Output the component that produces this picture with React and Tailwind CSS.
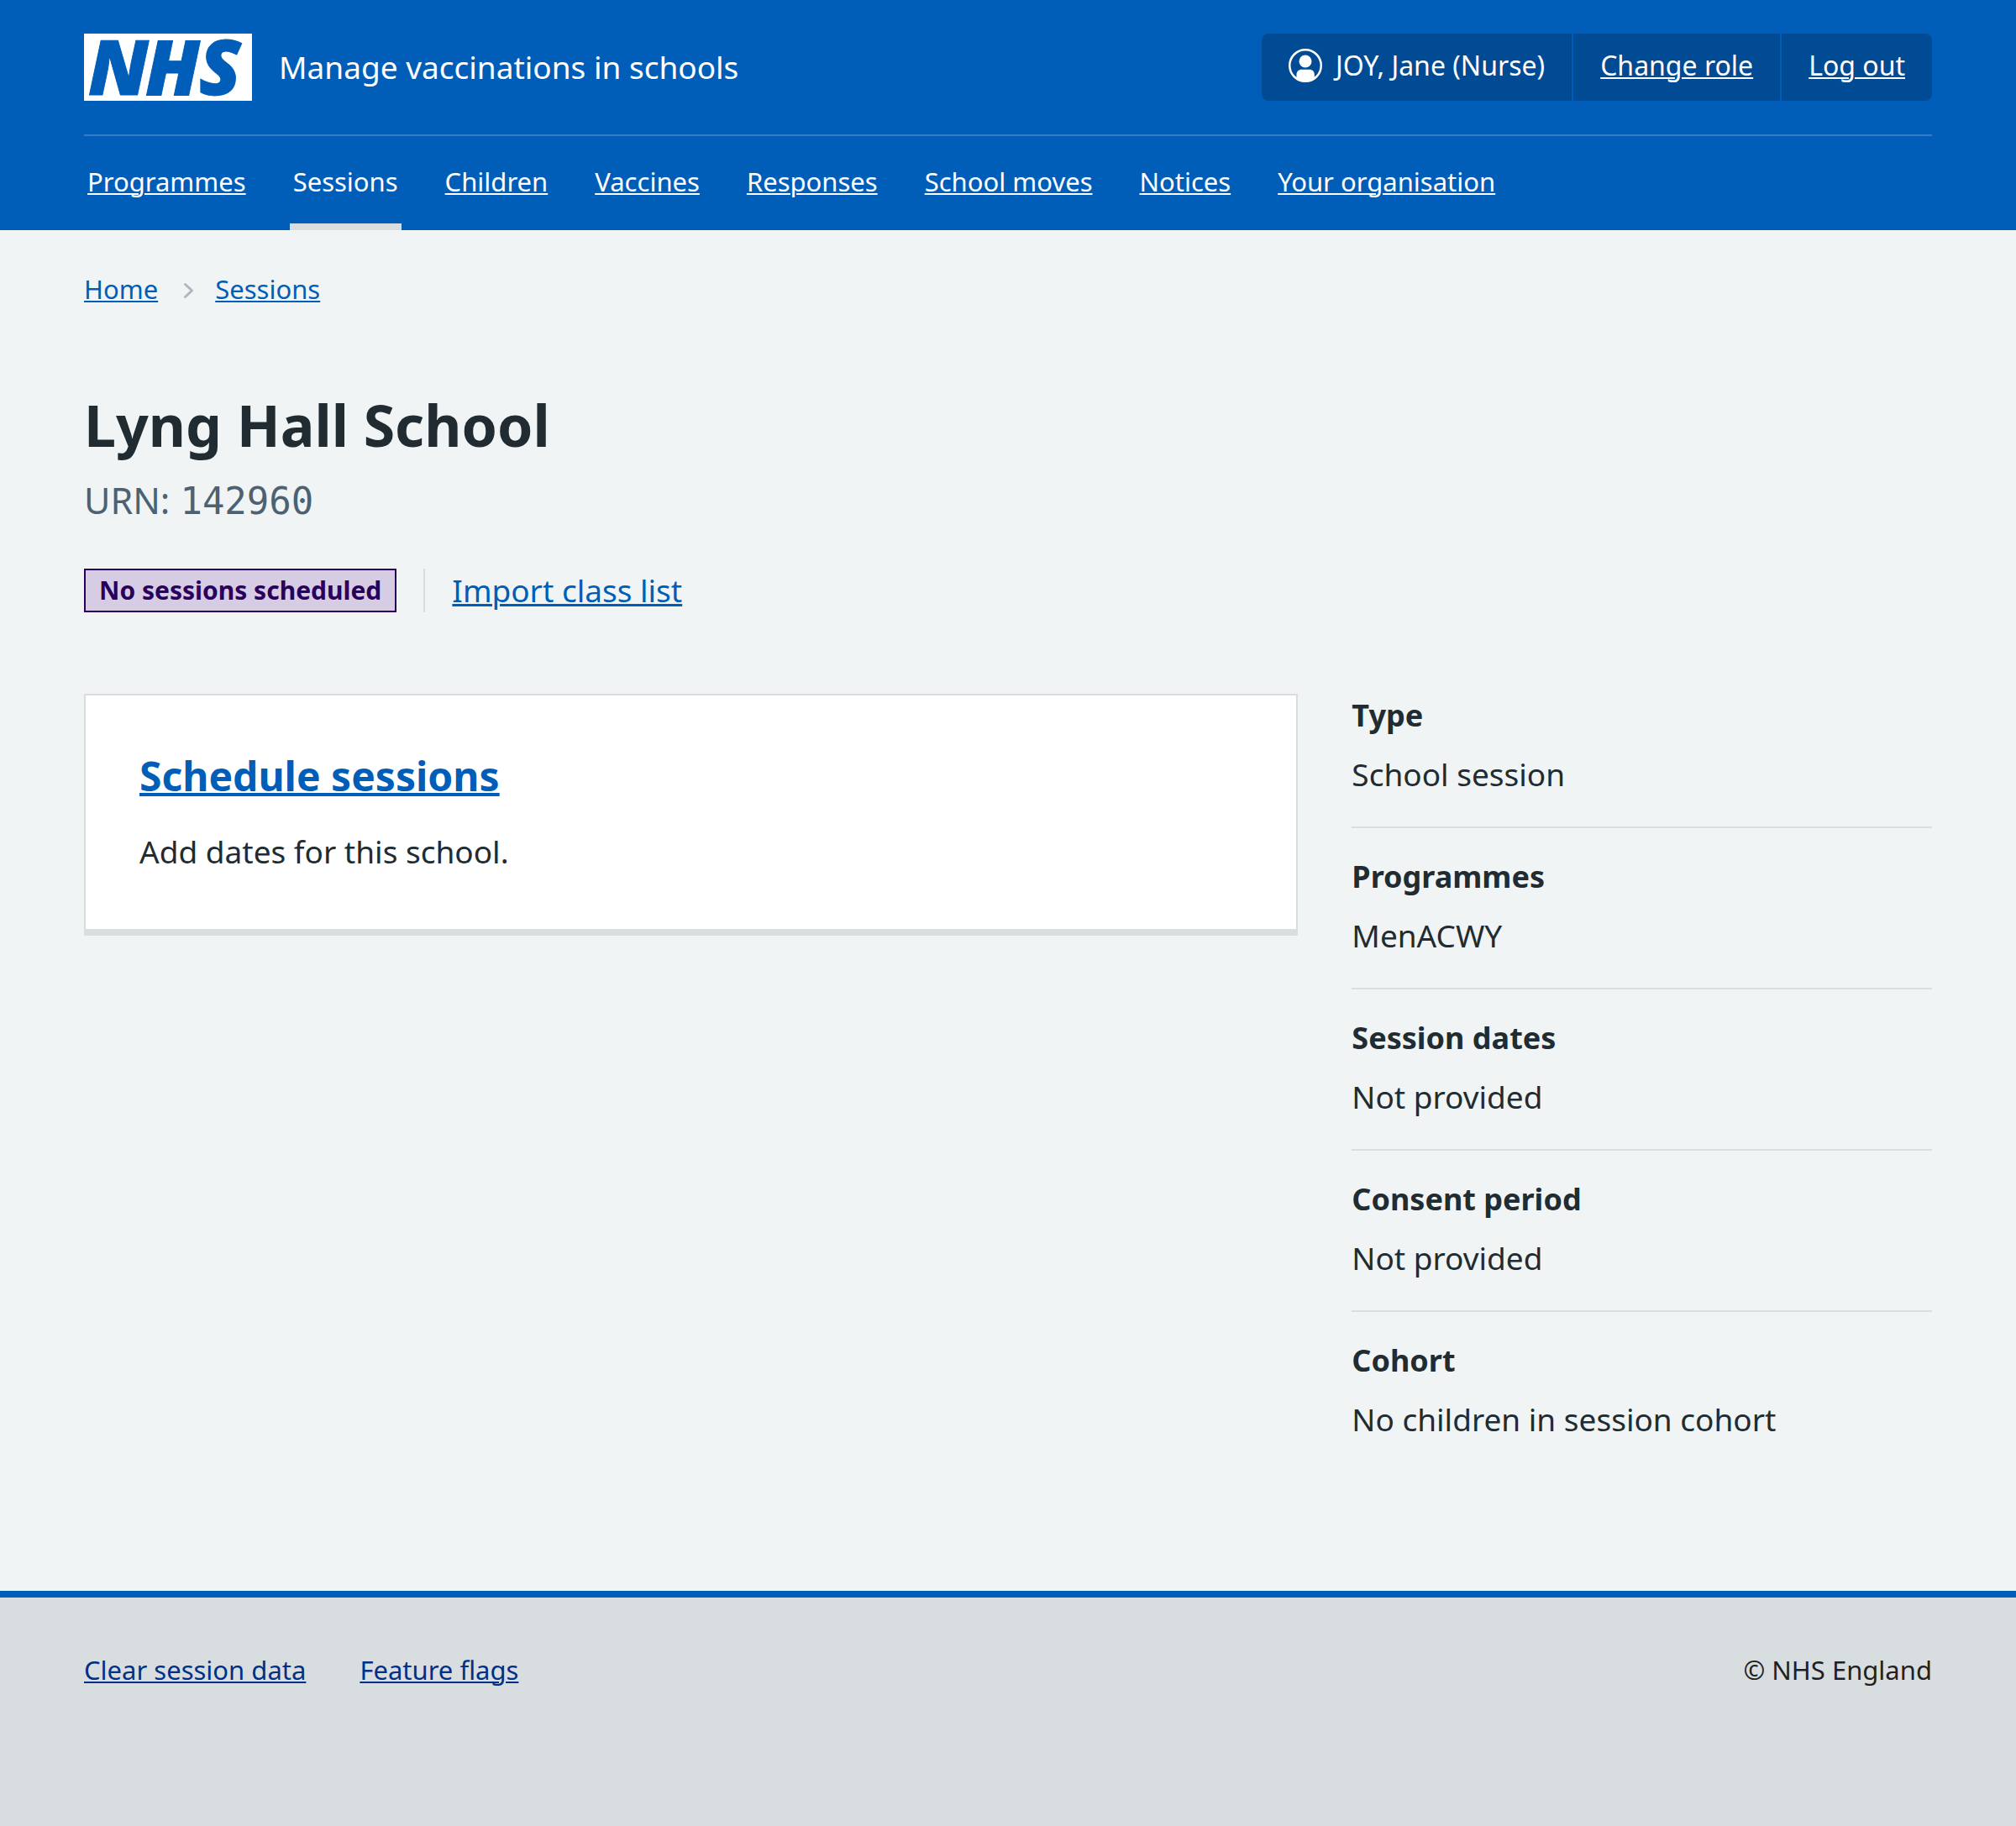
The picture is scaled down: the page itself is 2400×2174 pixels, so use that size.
import React from "react";

const navItems = [
  { label: "Programmes" },
  { label: "Sessions", current: true },
  { label: "Children" },
  { label: "Vaccines" },
  { label: "Responses" },
  { label: "School moves" },
  { label: "Notices" },
  { label: "Your organisation" },
];

const details = [
  { term: "Type", value: "School session" },
  { term: "Programmes", value: "MenACWY" },
  { term: "Session dates", value: "Not provided" },
  { term: "Consent period", value: "Not provided" },
  { term: "Cohort", value: "No children in session cohort" },
];

const thinLink = "underline decoration-2 underline-offset-2";

function Logo() {
  return (
    <a href="#" aria-label="NHS homepage" className="block h-20 w-[200px] shrink-0">
      <svg viewBox="0 0 200 80" className="block h-full w-full overflow-visible" role="img" aria-label="NHS">
        <rect width="200" height="80" fill="#fff" />
        <text
          x="5 73 137"
          y="72.5"
          fill="#005eb8"
          stroke="#005eb8"
          strokeWidth="1"
          fontFamily="'Noto Sans', 'Open Sans', sans-serif"
          fontSize="91"
          fontWeight="900"
          fontStyle="italic"
        >
          NHS
        </text>
      </svg>
    </a>
  );
}

function UserIcon() {
  return (
    <svg viewBox="0 0 40 40" className="h-10 w-10 shrink-0" aria-hidden="true">
      <circle cx="20" cy="20" r="18.75" fill="none" stroke="#fff" strokeWidth="2.5" />
      <circle cx="20" cy="15" r="7.5" fill="#fff" />
      <path
        d="M9.5 35V30.5C9.5 27 12 24.7 15.5 24.7H24.8C28.3 24.7 30.8 27 30.8 30.5V35C28 38 24 39.5 20 39.5S12.4 38 9.5 35Z"
        fill="#fff"
      />
    </svg>
  );
}

function Header() {
  return (
    <header className="bg-[#005eb8] px-[100px] text-white">
      <div className="flex items-center justify-between py-10">
        <div className="flex items-center gap-8">
          <Logo />
          <span className="text-[37px] leading-[52px]">Manage vaccinations in schools</span>
        </div>
        <ul className="flex h-20 divide-x-2 divide-[#005eb8] overflow-hidden rounded-lg bg-[#004b93] text-[32px] leading-[44px]">
          <li className="flex items-center gap-4 px-8 pb-1">
            <UserIcon />
            <span>JOY, Jane (Nurse)</span>
          </li>
          <li className="flex items-center px-8 pb-1">
            <a href="#" className={thinLink}>Change role</a>
          </li>
          <li className="flex items-center px-8 pb-1">
            <a href="#" className={thinLink}>Log out</a>
          </li>
        </ul>
      </div>
      <nav aria-label="Main" className="border-t-2 border-[#337ec6]">
        <ul className="flex gap-12 text-[31px] leading-[52px]">
          {navItems.map((item) => (
            <li key={item.label}>
              {item.current ? (
                <a
                  href="#"
                  aria-current="page"
                  className="block border-b-8 border-[#d8dde0] px-1 pt-7 pb-6"
                >
                  {item.label}
                </a>
              ) : (
                <a
                  href="#"
                  className="block border-b-8 border-transparent px-1 pt-7 pb-6 underline decoration-2 underline-offset-2"
                >
                  {item.label}
                </a>
              )}
            </li>
          ))}
        </ul>
      </nav>
    </header>
  );
}

function Breadcrumb() {
  return (
    <nav aria-label="Breadcrumb">
      <ol className="flex items-center text-[31px] leading-[44px] text-[#005eb8]">
        <li>
          <a href="#" className={thinLink}>Home</a>
        </li>
        <li aria-hidden="true" className="px-6">
          <svg viewBox="0 0 20 24" className="h-6 w-5">
            <path
              d="M8.5 6.500L16.500 14L8.500 21.500"
              fill="none"
              stroke="#aeb7bd"
              strokeWidth="3"
              strokeLinecap="round"
              strokeLinejoin="round"
            />
          </svg>
        </li>
        <li>
          <a href="#" className={thinLink}>Sessions</a>
        </li>
      </ol>
    </nav>
  );
}

export default function App() {
  return (
    <div className="flex min-h-screen flex-col bg-[#f0f4f5] font-['Noto_Sans','Open_Sans',sans-serif] text-[#212b32]">
      <Header />
      <main className="px-[100px] pt-12 pb-[142px]">
        <Breadcrumb />
        <h1 className="mt-[100px] text-[68px] leading-[80px] font-bold">Lyng Hall School</h1>
        <p className="mt-[18px] flex items-baseline gap-3 text-[43px] leading-[64px] text-[#4c6272]">
          URN: <span className="font-['DejaVu_Sans_Mono',monospace] text-[44px] leading-[44px]">142960</span>
        </p>
        <div className="mt-[49px] flex h-[52px] items-center">
          <strong className="flex h-full items-center border-2 border-[#29005b] bg-[#d6cce3] px-4 text-[30px] leading-[44px] font-bold text-[#29005b]">
            No sessions scheduled
          </strong>
          <div className="ml-8 h-full border-l-2 border-[#d8dde0] pl-8">
            <a
              href="#"
              className="text-[37px] leading-[52px] text-[#005eb8] underline decoration-3 underline-offset-2"
            >
              Import class list
            </a>
          </div>
        </div>
        <div className="mt-[97px] grid grid-cols-3 items-start gap-16">
          <section className="col-span-2 border-2 border-b-8 border-[#d8dde0] bg-white p-16">
            <h2 className="text-[48px] leading-[64px] font-bold">
              <a href="#" className="text-[#005eb8] underline decoration-4 underline-offset-2">
                Schedule sessions
              </a>
            </h2>
            <p className="mt-[30px] text-[37px] leading-[56px]">Add dates for this school.</p>
          </section>
          <dl className="text-[37px] leading-[52px]">
            {details.map((item) => (
              <div
                key={item.term}
                className="border-b-2 border-[#d8dde0] pt-8 pb-9 first:pt-0 last:border-b-0"
              >
                <dt className="text-[36px] font-bold">{item.term}</dt>
                <dd className="mt-[18px]">{item.value}</dd>
              </div>
            ))}
          </dl>
        </div>
      </main>
      <footer className="flex grow items-start justify-between border-t-8 border-[#005eb8] bg-[#d8dde0] px-[100px] py-16 text-[31px] leading-[44px]">
        <ul className="flex gap-16 text-[#003087]">
          <li>
            <a href="#" className={thinLink}>Clear session data</a>
          </li>
          <li>
            <a href="#" className={thinLink}>Feature flags</a>
          </li>
        </ul>
        <p className="text-[#231f20]">© NHS England</p>
      </footer>
    </div>
  );
}
